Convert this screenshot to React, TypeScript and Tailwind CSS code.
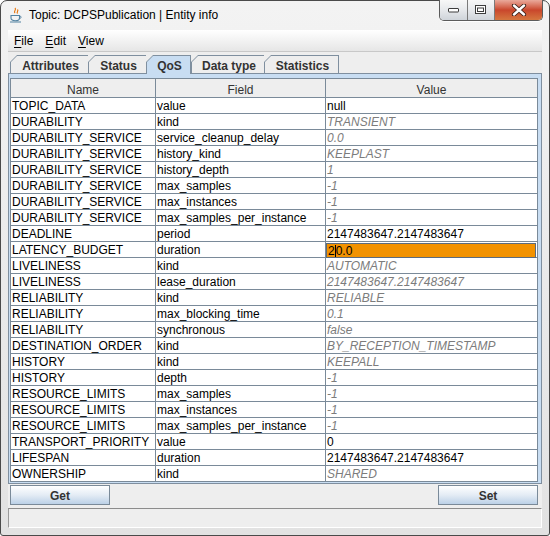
import React from "react";

type Row = {
  name: string;
  field: string;
  value: string;
  italic?: boolean;
  editing?: boolean;
};

const rows: Row[] = [
  { name: "TOPIC_DATA", field: "value", value: "null" },
  { name: "DURABILITY", field: "kind", value: "TRANSIENT", italic: true },
  { name: "DURABILITY_SERVICE", field: "service_cleanup_delay", value: "0.0", italic: true },
  { name: "DURABILITY_SERVICE", field: "history_kind", value: "KEEPLAST", italic: true },
  { name: "DURABILITY_SERVICE", field: "history_depth", value: "1", italic: true },
  { name: "DURABILITY_SERVICE", field: "max_samples", value: "-1", italic: true },
  { name: "DURABILITY_SERVICE", field: "max_instances", value: "-1", italic: true },
  { name: "DURABILITY_SERVICE", field: "max_samples_per_instance", value: "-1", italic: true },
  { name: "DEADLINE", field: "period", value: "2147483647.2147483647" },
  { name: "LATENCY_BUDGET", field: "duration", value: "20.0", editing: true },
  { name: "LIVELINESS", field: "kind", value: "AUTOMATIC", italic: true },
  { name: "LIVELINESS", field: "lease_duration", value: "2147483647.2147483647", italic: true },
  { name: "RELIABILITY", field: "kind", value: "RELIABLE", italic: true },
  { name: "RELIABILITY", field: "max_blocking_time", value: "0.1", italic: true },
  { name: "RELIABILITY", field: "synchronous", value: "false", italic: true },
  { name: "DESTINATION_ORDER", field: "kind", value: "BY_RECEPTION_TIMESTAMP", italic: true },
  { name: "HISTORY", field: "kind", value: "KEEPALL", italic: true },
  { name: "HISTORY", field: "depth", value: "-1", italic: true },
  { name: "RESOURCE_LIMITS", field: "max_samples", value: "-1", italic: true },
  { name: "RESOURCE_LIMITS", field: "max_instances", value: "-1", italic: true },
  { name: "RESOURCE_LIMITS", field: "max_samples_per_instance", value: "-1", italic: true },
  { name: "TRANSPORT_PRIORITY", field: "value", value: "0" },
  { name: "LIFESPAN", field: "duration", value: "2147483647.2147483647" },
  { name: "OWNERSHIP", field: "kind", value: "SHARED", italic: true },
];

const tabs = [
  { label: "Attributes", width: "w-[78px]" },
  { label: "Status", width: "w-[58px]" },
  { label: "QoS", width: "w-[45px]", selected: true },
  { label: "Data type", width: "w-[73px]" },
  { label: "Statistics", width: "w-[75px]", last: true },
];

function JavaIcon() {
  return (
    <svg width="16" height="16" viewBox="0 0 16 16">
      <path d="M7 1c2 2-2 3 0 5M9.5 2.5c1.5 1.5-1.5 2.5 0 4" fill="none" stroke="#e76f00" strokeWidth="1.1" />
      <path d="M3 8.5h8.5v2.5c0 1.8-1.6 2.8-4.2 2.8S3 12.8 3 11z" fill="none" stroke="#5382a1" strokeWidth="1.1" />
      <path d="M11.5 9.2c2 -0.3 2.3 1.8 0.2 2.3" fill="none" stroke="#5382a1" strokeWidth="1" />
      <path d="M2 15h11" stroke="#5382a1" strokeWidth="1" />
    </svg>
  );
}

function WindowButtons() {
  return (
    <div className="absolute top-[-1px] right-[6px] flex h-[21px] overflow-hidden rounded-b-[5px] border border-t-0 border-[#5b5b5b] shadow-[0_1px_0_rgba(255,255,255,0.8)]">
      <div className="flex w-[28px] items-center justify-center border-r border-[#7a7a7a] bg-linear-to-b from-[#f7f7f7] via-[#e6e8eb] to-[#cfd4da]">
        <svg width="12" height="6" viewBox="0 0 12 6">
          <rect x="0.5" y="1.5" width="10" height="3.5" rx="0.5" fill="#fff" stroke="#3d3d3d" />
        </svg>
      </div>
      <div className="flex w-[27px] items-center justify-center border-r border-[#7a7a7a] bg-linear-to-b from-[#f7f7f7] via-[#e6e8eb] to-[#cfd4da]">
        <svg width="12" height="10" viewBox="0 0 12 10">
          <rect x="0.5" y="0.5" width="10" height="8" fill="#fff" stroke="#3d3d3d" />
          <rect x="2.5" y="3" width="6" height="3.5" fill="none" stroke="#3d3d3d" />
        </svg>
      </div>
      <div className="flex w-[47px] items-center justify-center bg-linear-to-b from-[#e9a99b] via-[#c9462c] to-[#d5763f]">
        <svg width="16" height="12" viewBox="0 0 16 12">
          <path d="M3 1.5l10 9M13 1.5l-10 9" stroke="#3a2018" strokeWidth="4.2" strokeLinecap="round" />
          <path d="M3 1.5l10 9M13 1.5l-10 9" stroke="#ffffff" strokeWidth="2.4" strokeLinecap="round" />
        </svg>
      </div>
    </div>
  );
}

function Tab({ label, width, selected, last }: { label: string; width: string; selected?: boolean; last?: boolean }) {
  const outer = selected
    ? "relative z-10 -mb-px h-[19px] pt-px pl-px pr-px"
    : last
      ? "h-[18px] pt-px pl-px pr-px"
      : "h-[18px] pt-px pl-px";
  const inner = selected ? "bg-[#c8ddf2] pb-px" : "bg-[#eeeeee]";
  return (
    <div className={`${width} ${outer} shrink-0 bg-[#7f8f9f] [clip-path:polygon(0_7px,7px_0,100%_0,100%_100%,0_100%)]`}>
      <div className={`${inner} flex h-full items-center justify-center pl-[2px] pt-[2px] text-[12px] font-bold text-[#333333] [clip-path:polygon(0_6px,6px_0,100%_0,100%_100%,0_100%)]`}>
        {label}
      </div>
    </div>
  );
}

function MetalButton({ label }: { label: string }) {
  return (
    <div className="flex h-[20px] w-[100px] items-center justify-center border border-[#7a8a99] bg-linear-to-b from-[#ffffff] via-[#e4ecf5] to-[#bcd1e7] pt-px text-[12px] font-bold text-[#333333]">
      {label}
    </div>
  );
}

export default function App() {
  return (
    <div className="h-[536px] w-[550px] bg-white [font-family:'Liberation_Sans',Arial,sans-serif]">
      <div className="relative flex h-[536px] w-[550px] flex-col rounded-t-[7px] rounded-b-[3px] border border-[#4a4a4a] bg-linear-to-b from-[#f3f3f3] to-[#e2e2e2]">
        {/* title bar */}
        <div className="flex h-[29px] shrink-0 items-center pl-[7px]">
          <div className="mt-[-1px] flex h-[16px] w-[16px] items-center justify-center">
            <JavaIcon />
          </div>
          <span className="ml-[5px] mt-[-1px] text-[12px] text-black">Topic: DCPSPublication | Entity info</span>
          <WindowButtons />
        </div>

        {/* client */}
        <div className="mx-[7px] flex h-[498px] shrink-0 flex-col bg-[#eeeeee] text-[12px]">
          {/* menu bar */}
          <div className="flex h-[22px] shrink-0 items-center border-b border-[#c8c8c8] bg-linear-to-b from-[#ffffff] to-[#e6e6e6] text-[12px] text-black">
            <span className="px-[6px]"><span className="underline underline-offset-2">F</span>ile</span>
            <span className="px-[6px]"><span className="underline underline-offset-2">E</span>dit</span>
            <span className="px-[6px]"><span className="underline underline-offset-2">V</span>iew</span>
          </div>

          {/* tabs */}
          <div className="flex h-[21px] shrink-0 items-end pl-[2px]">
            {tabs.map((t) => (
              <Tab key={t.label} {...t} />
            ))}
          </div>

          {/* tab content */}
          <div className="h-[411px] shrink-0 border border-[#7f8f9f] bg-[#c8ddf2] pt-[4px] pb-[1px] pl-[1px] pr-[3px]">
            <div className="h-[404px] border-x border-t border-[#7a8a99] bg-white">
              <div className="grid h-[19px] grid-cols-[145px_170px_211px] border-b border-[#7a8a99] bg-[#eeeeee] pt-[2px] text-[#333333]">
                <div className="-mt-[2px] flex items-center justify-center border-r border-[#7a8a99] pt-[2px]">Name</div>
                <div className="-mt-[2px] flex items-center justify-center border-r border-[#7a8a99] pt-[2px]">Field</div>
                <div className="flex items-center justify-center">Value</div>
              </div>
              {rows.map((r, i) => (
                <div key={i} className="grid h-[16px] grid-cols-[145px_170px_211px] border-b border-[#7a8a99] leading-[16px] text-black">
                  <div className="whitespace-nowrap border-r border-[#7a8a99] pl-[1px]">{r.name}</div>
                  <div className="whitespace-nowrap border-r border-[#7a8a99] pl-[1px]">{r.field}</div>
                  {r.editing ? (
                    <div className="h-[15px] pr-[1px] pt-[1px]">
                      <div className="flex h-[15px] items-center border border-[#5c6b7c] bg-[#f29200] pl-[1px] pt-px leading-[13px] text-black">
                        <span>2</span>
                        <span className="h-[12px] w-px bg-black" />
                        <span>0.0</span>
                      </div>
                    </div>
                  ) : (
                    <div className={r.italic ? "whitespace-nowrap pl-[1px] italic text-[#7c7c7c]" : "whitespace-nowrap pl-[1px]"}>{r.value}</div>
                  )}
                </div>
              ))}
            </div>
          </div>

          {/* buttons */}
          <div className="flex h-[22px] shrink-0 items-start justify-between pl-[2px] pr-[4px] pt-[1px]">
            <MetalButton label="Get" />
            <MetalButton label="Set" />
          </div>

          {/* status bar */}
          <div className="mt-[2px] h-[20px] shrink-0 border border-b-white border-l-[#9a9a9a] border-r-white border-t-[#8c8c8c] bg-[#eeeeee]" />
        </div>
      </div>
    </div>
  );
}
